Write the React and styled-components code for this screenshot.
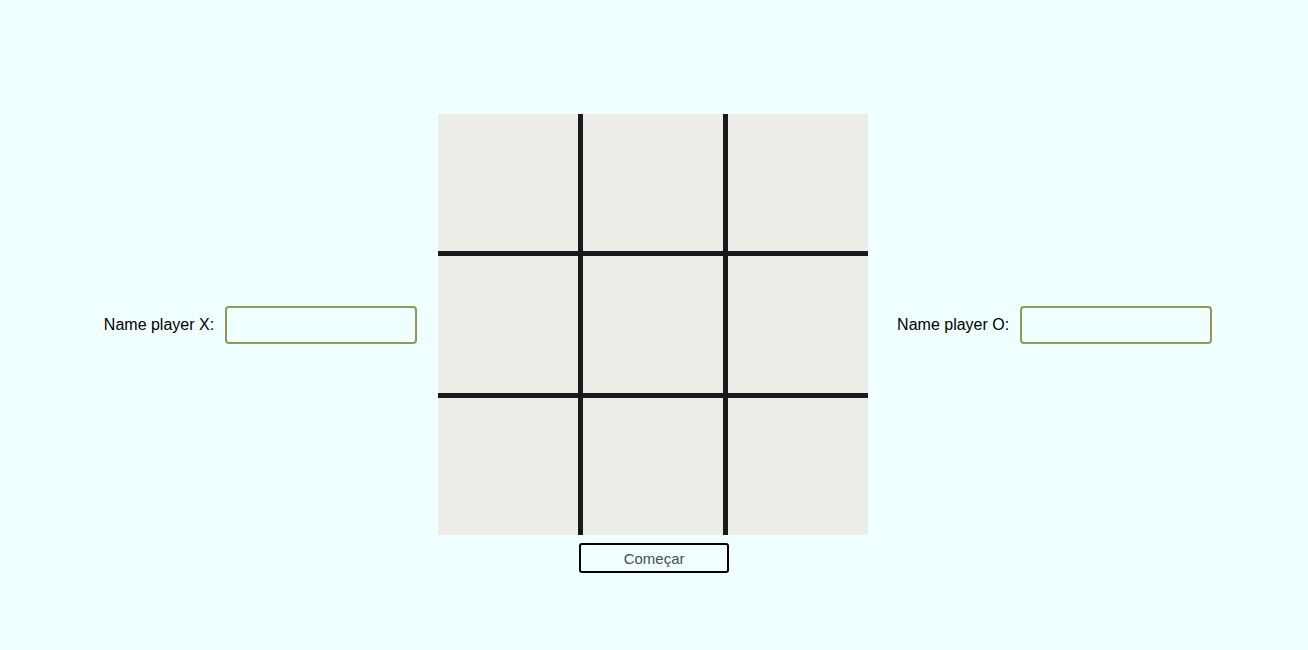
import React from "react";
import styled, { createGlobalStyle } from "styled-components";

const Global = createGlobalStyle`
  html, body { margin: 0; padding: 0; background: #f0ffff; }
  body { font-family: "Liberation Sans", Arial, sans-serif; }
  * { box-sizing: border-box; }
`;

const Page = styled.div`
  height: 649px;
  padding-left: 8px;
  display: grid;
  grid-template-columns: auto auto auto;
  grid-template-rows: 1fr auto 1fr;
  justify-content: center;
`;

const PlayerField = styled.div`
  grid-row: 2;
  display: flex;
  align-items: center;
  gap: 11px;
  margin-right: ${(p) => p.$mr || 0}px;
  margin-left: ${(p) => p.$ml || 0}px;
`;

const Label = styled.label`
  font-size: 16px;
  color: #000;
`;

const NameInput = styled.input`
  width: 192px;
  height: 38px;
  border: 2px solid #8f9a56;
  border-radius: 4px;
  background: transparent;
  font-family: inherit;
  font-size: 16px;
  padding: 0 8px;
  outline: none;
`;

const Board = styled.div`
  grid-row: 2;
  width: 430px;
  height: 421px;
  display: grid;
  grid-template-columns: repeat(3, 1fr);
  grid-template-rows: repeat(3, 1fr);
  gap: 5px;
  background: #1a181d;
`;

const Cell = styled.div`
  background: #edede8;
`;

const Footer = styled.div`
  grid-row: 3;
  grid-column: 2;
  display: flex;
  justify-content: center;
  align-items: flex-start;
  padding-top: 8px;
  padding-left: 2px;
`;

const StartButton = styled.button`
  width: 150px;
  height: 30px;
  border: 2px solid #000;
  border-radius: 3px;
  background: transparent;
  color: #4d4d4d;
  font-family: "Liberation Sans", Arial, sans-serif;
  font-size: 15px;
  cursor: pointer;
`;

export default function App() {
  return (
    <>
      <Global />
      <Page>
        <PlayerField $mr={21}>
          <Label>Name player X:</Label>
          <NameInput type="text" />
        </PlayerField>
        <Board>
          {Array.from({ length: 9 }).map((_, i) => (
            <Cell key={i} />
          ))}
        </Board>
        <PlayerField $ml={29}>
          <Label>Name player O:</Label>
          <NameInput type="text" />
        </PlayerField>
        <Footer>
          <StartButton>Começar</StartButton>
        </Footer>
      </Page>
    </>
  );
}
